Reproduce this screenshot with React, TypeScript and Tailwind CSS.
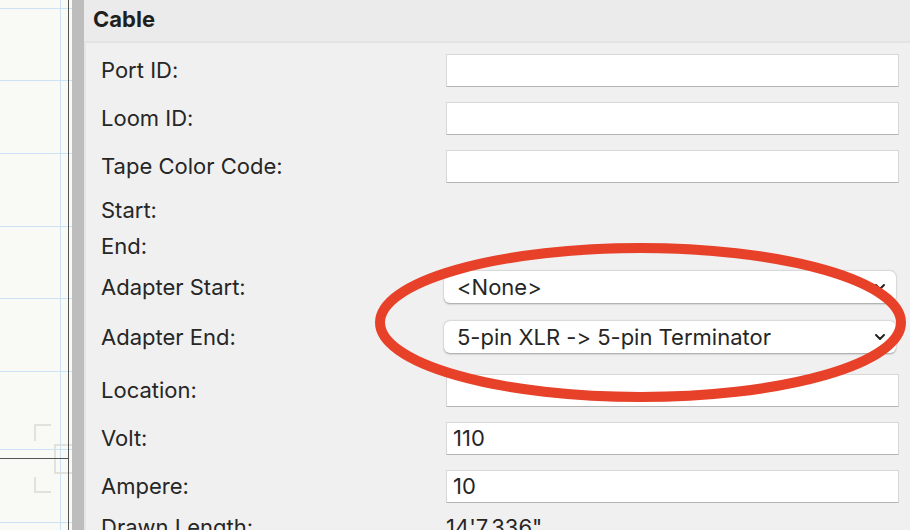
import React from "react"

type Row = {
  label: string
  mt: number
  h: number
  kind: "input" | "select" | "none" | "text"
  value?: string
}

const rows: Row[] = [
  { label: "Port ID:", mt: 11, h: 33, kind: "input" },
  { label: "Loom ID:", mt: 15, h: 33, kind: "input" },
  { label: "Tape Color Code:", mt: 15, h: 33, kind: "input" },
  { label: "Start:", mt: 11, h: 32, kind: "none" },
  { label: "End:", mt: 4, h: 32, kind: "none" },
  { label: "Adapter Start:", mt: 9, h: 32, kind: "select", value: "<None>" },
  { label: "Adapter End:", mt: 18, h: 32, kind: "select", value: "5-pin XLR -> 5-pin Terminator" },
  { label: "Location:", mt: 21, h: 33, kind: "input" },
  { label: "Volt:", mt: 15, h: 33, kind: "input", value: "110" },
  { label: "Ampere:", mt: 15, h: 33, kind: "input", value: "10" },
  { label: "Drawn Length:", mt: 8, h: 33, kind: "text", value: "14'7.336\"" }
]

function Chevron() {
  return (
    <svg width="12" height="8" viewBox="0 0 12 8" className="shrink-0">
      <path d="M2 2 L6 6 L10 2" fill="none" stroke="#222" strokeWidth="2" strokeLinecap="round" strokeLinejoin="round" />
    </svg>
  )
}

function Control({ row }: { row: Row }) {
  if (row.kind === "input") {
    return (
      <div className="flex h-full w-[453px] items-center border border-[#d8d8d8] border-b-[#b4b4b4] bg-white px-[6px] text-[#262626]">
        {row.value}
      </div>
    )
  }
  if (row.kind === "select") {
    return (
      <div className="ml-[-2px] flex h-full w-[452px] items-center justify-between rounded-[6px] bg-white pr-[10px] pl-[13px] text-[#262626] shadow-[0_0.5px_2px_rgba(0,0,0,0.35)]">
        <span>{row.value}</span>
        <Chevron />
      </div>
    )
  }
  if (row.kind === "text") {
    return <div className="text-[#262626]">{row.value}</div>
  }
  return null
}

function Canvas() {
  const blue = [8, 80, 153, 226, 298, 371, 449, 522]
  return (
    <div className="h-full w-[72px] shrink-0 bg-[#f9faf5]">
      <svg width="72" height="530" viewBox="0 0 72 530">
        {blue.map((y) => (
          <line key={y} x1="0" y1={y + 0.5} x2="72" y2={y + 0.5} stroke="#cde2f4" strokeWidth="1" />
        ))}
        <line x1="60.5" y1="0" x2="60.5" y2="530" stroke="#cde2f4" strokeWidth="1" />
        <path d="M35 441 V425 H51" fill="none" stroke="#e2e2dd" strokeWidth="2" />
        <path d="M35 477 V492 H51" fill="none" stroke="#e2e2dd" strokeWidth="2" />
        <rect x="55" y="445" width="30" height="28" fill="none" stroke="#e2e2dd" strokeWidth="2" />
        <line x1="0" y1="458.5" x2="69" y2="458.5" stroke="#555" strokeWidth="1" />
        <line x1="68.5" y1="0" x2="68.5" y2="530" stroke="#555" strokeWidth="1" />
      </svg>
    </div>
  )
}

export default function App() {
  return (
    <div className="relative flex h-[530px] w-[910px] overflow-hidden bg-[#efefef] font-['Inter','Noto_Sans',sans-serif] text-[22px] text-[#262626] [font-feature-settings:'calt'_0]">
      <Canvas />
      <div className="h-full w-[12px] shrink-0 bg-[#bdbdbd]" />
      <div className="flex h-full flex-1 flex-col">
        <div className="flex h-[43px] shrink-0 items-center border-b-2 border-[#e3e3e3] bg-[#ebebeb] pb-[3px] pl-[9px] text-[22px] font-bold text-[#1f1f1f]">
          Cable
        </div>
        <div className="flex flex-1 flex-col border-l-2 border-[#e6e6e6] bg-[#f0f0f0] pr-[11px] pl-[15px]">
          {rows.map((row) => (
            <div
              key={row.label}
              className="flex shrink-0 items-center"
              style={{ marginTop: row.mt, height: row.h }}
            >
              <div className="w-[345px] shrink-0">{row.label}</div>
              <Control row={row} />
            </div>
          ))}
        </div>
      </div>
      <svg className="pointer-events-none absolute inset-0" width="910" height="530" viewBox="0 0 910 530">
        <ellipse cx="640.5" cy="322.5" rx="260.5" ry="74.5" fill="none" stroke="#e8412a" strokeWidth="10" />
      </svg>
    </div>
  )
}
